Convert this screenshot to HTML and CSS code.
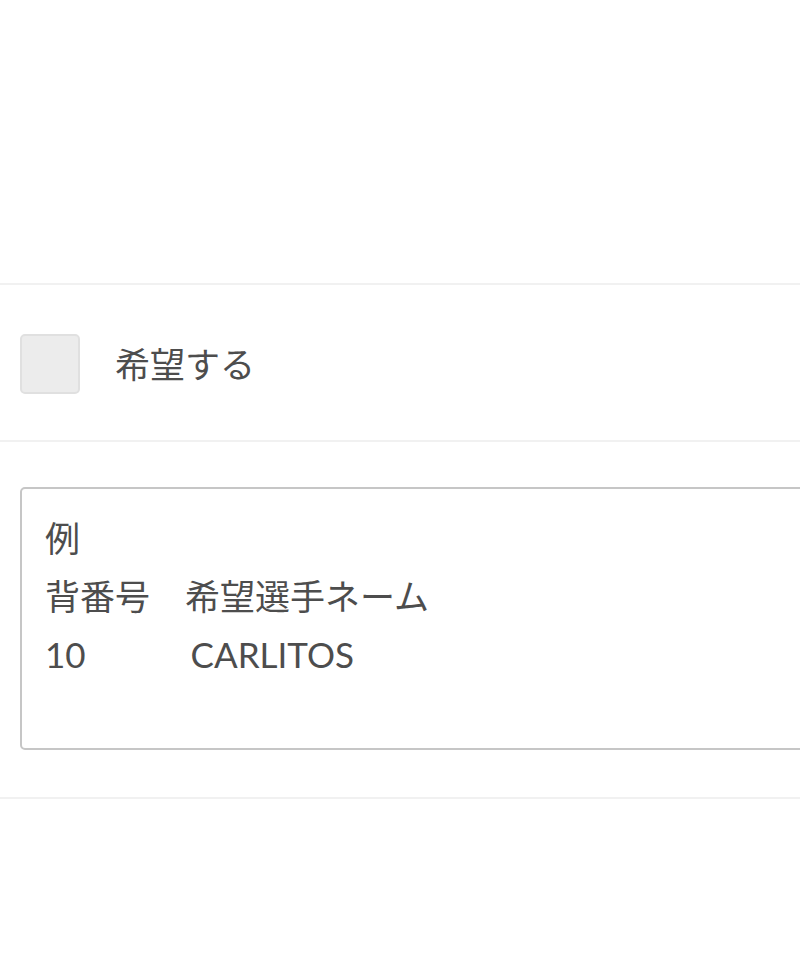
FILE: index.html
```html
<!DOCTYPE html>
<html lang="ja">
<head>
<meta charset="utf-8">
<title>希望する</title>
<link rel="stylesheet" href="styles.css">
</head>
<body>
<div class="page">
  <div class="top-space"></div>
  <div class="divider"></div>
  <label class="check-row">
    <span class="checkbox"></span>
    <span class="check-label">希望する</span>
  </label>
  <div class="divider"></div>
  <div class="field-row">
    <textarea class="note" readonly>例
背番号　希望選手ネーム
10　　　CARLITOS</textarea>
  </div>
  <div class="divider"></div>
</div>
</body>
</html>
```

FILE: styles.css
```css
html, body {
  margin: 0;
  padding: 0;
  background: #ffffff;
  overflow: hidden;
}
body {
  font-family: Lato, "Noto Sans CJK JP", sans-serif;
  color: #4d4d4d;
}
.page {
  width: 800px;
  overflow: hidden;
}
.top-space {
  height: 283px;
}
.divider {
  height: 2px;
  background: #f1f1f1;
}
.check-row {
  display: flex;
  align-items: center;
  gap: 35px;
  padding: 49px 0 46px 20px;
}
.checkbox {
  width: 56px;
  height: 56px;
  border: 2px solid #e0e0e0;
  border-radius: 5px;
  background: #ececec;
  flex: none;
}
.check-label {
  font-size: 35px;
  line-height: 40px;
}
.field-row {
  padding: 45px 0 47px 20px;
  overflow: hidden;
}
.note {
  display: block;
  box-sizing: border-box;
  width: 800px;
  height: 263px;
  margin: 0;
  padding: 20px 23px;
  border: 2px solid #c6c6c6;
  border-radius: 5px;
  font-family: Lato, "Noto Sans CJK JP", sans-serif;
  font-size: 35px;
  line-height: 58px;
  color: #4d4d4d;
  background: #ffffff;
  resize: none;
  outline: none;
  overflow: hidden;
}
```
